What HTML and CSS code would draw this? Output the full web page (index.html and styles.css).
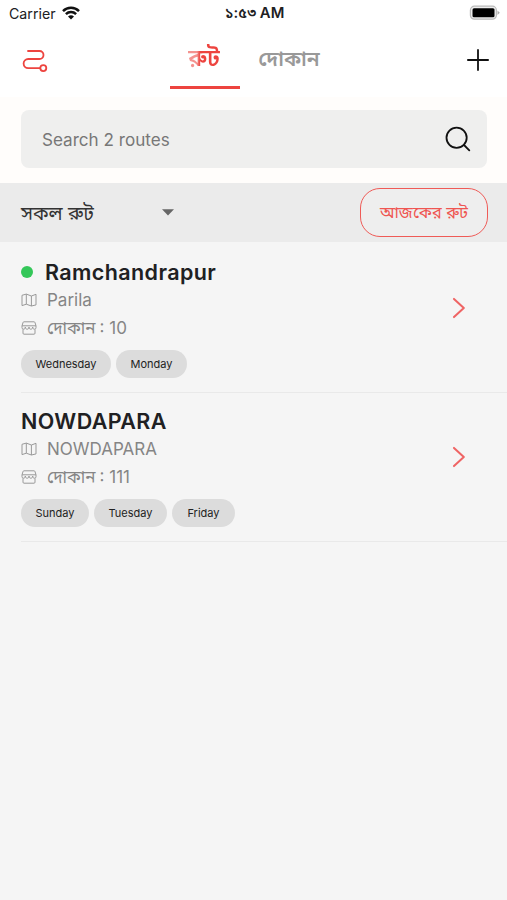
FILE: index.html
```html
<!DOCTYPE html>
<html lang="bn">
<head>
<meta charset="utf-8">
<title>রুট</title>
<link rel="stylesheet" href="styles.css">
</head>
<body>
<div class="status">
  <div class="carrier"><span class="carrier-name">Carrier</span>
    <svg width="18" height="14" viewBox="0 0 18 14" fill="none" stroke="#111" stroke-width="2.5"><path d="M1 5.1a11.4 11.4 0 0 1 16 0M3.9 8.2a7.3 7.3 0 0 1 10.2 0"/><path d="M9 13.6 6 10.6a4.3 4.3 0 0 1 6 0z" fill="#111" stroke="none"/></svg>
  </div>
  <span class="time">১:৫৩ AM</span>
  <svg class="battery" width="31" height="16" viewBox="0 0 31 16"><rect x="1.4" y="1.2" width="26" height="13" rx="4" fill="#eee" stroke="#bbb" stroke-width="1.2"/><rect x="3.5" y="3.2" width="22" height="9" rx="1.5" fill="#000"/><path d="M28.5 5.5v4.6l2.3-2.3z" fill="#aaa"/></svg>
</div>
<header class="header">
  <svg class="route-icon" width="26" height="24" viewBox="0 0 26 24" fill="none" stroke="#ed443f" stroke-width="1.8" stroke-linecap="round"><path d="M6 2h11.5a4 4 0 0 1 0 8H6.2a4.6 4.6 0 0 0 0 9.2h11.6"/><circle cx="21.3" cy="19.1" r="3"/></svg>
  <nav class="tabs">
    <span class="tab active"><span class="tab-text">রুট</span></span>
    <span class="tab"><span class="tab-text">দোকান</span></span>
  </nav>
  <svg class="plus" width="22" height="22" viewBox="0 0 22 22" stroke="#111" stroke-width="1.8" stroke-linecap="round"><path d="M11 .9v20.2M.9 11h20.2"/></svg>
</header>
<section class="search-area">
  <div class="search">
    <span class="placeholder">Search 2 routes</span>
    <svg width="26" height="26" viewBox="0 0 26 26" fill="none" stroke="#111" stroke-width="1.8" stroke-linecap="round"><circle cx="11.6" cy="11.7" r="10.1"/><path d="m19 19 5.3 5.3"/></svg>
  </div>
</section>
<section class="filter">
  <div class="select"><span class="select-text">সকল রুট</span>
    <svg width="12" height="7" viewBox="0 0 12 7"><path d="M0 .3h12L6 6.5z" fill="#666"/></svg>
  </div>
  <div class="today"><span>আজকের রুট</span></div>
</section>
<svg class="defs" aria-hidden="true">
  <symbol id="map" viewBox="0 0 16 14"><path d="m1 2.3 4.3-1.2L10.4 3 15 1.3v10.6L10.4 13 5.3 11.2 1 12.6zM5.3 1.1v10.1M10.4 3v10"/></symbol>
  <symbol id="shop" viewBox="0 0 16 14"><path d="M3 .8h10a1 1 0 0 1 1 .8l1 3.2v1.9a1.5 1.5 0 0 1-1.5 1.5c-1.2 0-1.8-.9-1.8-2.2 0 1.3-.7 2.2-1.9 2.2S8 7.300 8 6c0 1.300-.6 2.200-1.800 2.200S4.300 7.300 4.300 6c0 1.300-.6 2.200-1.800 2.200A1.500 1.500 0 0 1 1 6.700V4.800l1-3.200a1 1 0 0 1 1-.8zM1 4.800h14M2 8.400v3.800a1 1 0 0 0 1 1h10a1 1 0 0 0 1-1V8.400"/></symbol>
</svg>
<main class="list">
  <article class="route">
    <div class="info">
      <h2 class="name"><i class="dot"></i><span>Ramchandrapur</span></h2>
      <div class="line"><svg class="icon"><use href="#map"/></svg><span>Parila</span></div>
      <div class="line"><svg class="icon"><use href="#shop"/></svg><span>দোকান</span><span class="count">: 10</span></div>
      <div class="days"><span class="day wed">Wednesday</span><span class="day mon">Monday</span></div>
    </div>
    <svg class="chevron" width="13" height="22" viewBox="0 0 13 22"><path d="m2 1.900 9.800 9.100L2 20.100"/></svg>
  </article>
  <article class="route">
    <div class="info">
      <h2 class="name">NOWDAPARA</h2>
      <div class="line"><svg class="icon"><use href="#map"/></svg><span>NOWDAPARA</span></div>
      <div class="line"><svg class="icon"><use href="#shop"/></svg><span>দোকান</span><span class="count">: 111</span></div>
      <div class="days"><span class="day sun">Sunday</span><span class="day tue">Tuesday</span><span class="day fri">Friday</span></div>
    </div>
    <svg class="chevron" width="13" height="22" viewBox="0 0 13 22"><path d="m2 1.900 9.800 9.100L2 20.100"/></svg>
  </article>
</main>
</body>
</html>
```
FILE: styles.css
```css
* { box-sizing: border-box; }
body {
  margin: 0;
  width: 507px;
  min-height: 900px;
  background: #f5f5f5;
  font-family: Inter, "Noto Sans Bengali", "Noto Sans", sans-serif;
  color: #202022;
  white-space: nowrap;
  overflow: hidden;
}
svg { display: block; flex: none; }
.defs { width: 0; height: 0; position: absolute; }
.status {
  height: 28px;
  padding: 0 7px 0 9px;
  background: #fff;
  display: grid;
  grid-template-columns: 1fr auto 1fr;
  align-items: center;
}
.carrier { display: flex; align-items: center; gap: 6px; height: 26px; margin-bottom: 2px; font-size: 14.2px; }
.time { font-size: 14.8px; font-weight: 600; }
.battery { justify-self: end; margin-bottom: 2px; }
.header {
  height: 69px;
  background: #fff;
  display: flex;
  align-items: flex-start;
  padding: 0 18px 0 22px;
}
.route-icon { margin-top: 21px; }
.tabs { display: flex; margin-left: 122px; gap: 14px; }
.tab {
  width: 70px;
  height: 61px;
  display: flex;
  justify-content: center;
  line-height: 61px;
  font-size: 21px;
  font-weight: 600;
  color: #999;
}
.active { color: #ed443f; border-bottom: 3px solid #ed443f; font-size: 23px; }
.active .tab-text {
  margin-right: 2px;
  background: linear-gradient(90deg, #f4938f 9px, #ed443f 12px);
  background-clip: text;
  -webkit-background-clip: text;
  color: transparent;
}
.plus { margin: 21px 0 0 auto; }
.search-area { height: 86px; padding: 13px 20px 0 21px; background: #fffdfb; }
.search {
  height: 58px;
  padding: 0 16px 0 21px;
  border-radius: 8px;
  background: #efefee;
  display: flex;
  align-items: center;
  justify-content: space-between;
}
.placeholder { margin-top: 1px; font-size: 17.1px; color: #777; }
.filter {
  height: 59px;
  padding: 0 19px 0 21px;
  background: #ebebeb;
  display: flex;
  align-items: center;
  justify-content: space-between;
}
.select { width: 153px; display: flex; align-items: center; justify-content: space-between; font-size: 19.3px; line-height: 58px; color: #333; }
.today {
  width: 128px;
  height: 49px;
  border: 1.6px solid #ef5b57;
  border-radius: 20px;
  background: #eeeeee;
  color: #ef5551;
  font-size: 16.3px;
  line-height: 46px;
  text-align: center;
}
.route {
  height: 149px;
  margin-left: 21px;
  padding: 14px 42px 0 0;
  border-bottom: 1px solid #e9e9e9;
  display: flex;
  justify-content: space-between;
}
.route:first-child { height: 151px; padding-top: 16px; }
.name { margin: 0; height: 28px; line-height: 28px; font-size: 21.5px; font-weight: 600; letter-spacing: .4px; display: flex; align-items: center; }
.dot { width: 12px; height: 12px; margin-right: 12px; border-radius: 50%; background: #34c759; }
.line { height: 28px; display: flex; align-items: center; font-size: 17px; line-height: 28px; color: #858585; }
.icon { width: 16px; height: 14px; margin-right: 10px; fill: none; stroke: #999; stroke-width: 1; }
.count { margin-left: 4px; }
.days { display: flex; gap: 5px; margin-top: 8px; }
.day { height: 28px; border-radius: 14px; background: #dcdcdc; color: #222; font-size: 11px; line-height: 29px; text-align: center; }
.wed { width: 90px; }
.mon { width: 71px; }
.sun { width: 68px; }
.tue { width: 73px; }
.fri { width: 63px; }
.chevron { margin-top: 39px; fill: none; stroke: #ef6464; stroke-width: 2; stroke-linecap: round; stroke-linejoin: round; }
```
